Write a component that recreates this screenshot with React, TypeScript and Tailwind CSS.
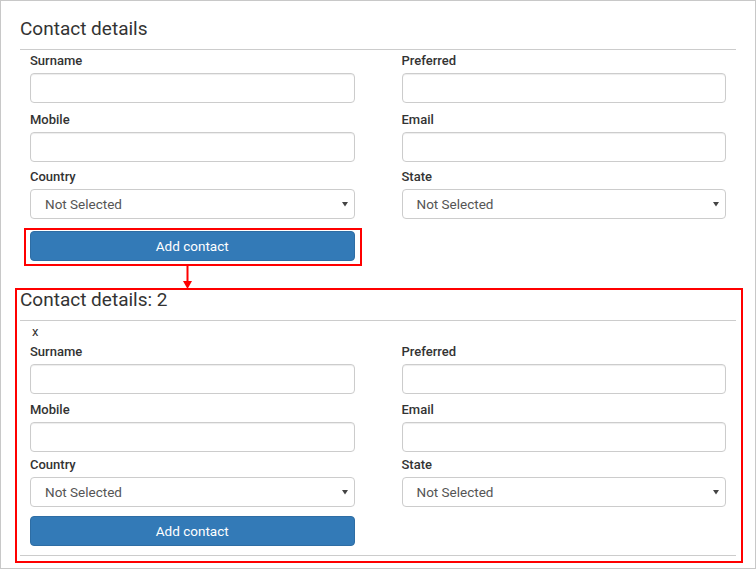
import React from "react";

const font = { fontFamily: "Roboto, 'Liberation Sans', sans-serif" };

function Label({ text }: { text: string }) {
  return <div className="h-[20px] leading-[20px] text-[13px] font-medium text-[#333] mb-[2px]">{text}</div>;
}

function TextInput() {
  return <div className="h-[30px] w-full rounded-[4px] border border-[#ccc] bg-white shadow-[inset_0_1px_1px_rgba(0,0,0,0.075)]" />;
}

function SelectBox() {
  return (
    <div className="h-[30px] w-full rounded-[4px] border border-[#ccc] bg-white flex items-center justify-between pl-[14px] pr-[6px]">
      <span className="text-[13.5px] text-[#555]">Not Selected</span>
      <svg width="6" height="5" viewBox="0 0 6 5"><path d="M0 0 L6 0 L3 4.5 Z" fill="#444" /></svg>
    </div>
  );
}

function Field({ label, select }: { label: string; select?: boolean }) {
  return (
    <div>
      <Label text={label} />
      {select ? <SelectBox /> : <TextInput />}
    </div>
  );
}

function ContactForm({ g1, g2, g3 }: { g1: string; g2: string; g3: string }) {
  return (
    <div className="px-[10px]">
      <div className={`grid grid-cols-2 gap-x-[47px] ${g1}`}>
        <Field label="Surname" />
        <Field label="Preferred" />
      </div>
      <div className={`grid grid-cols-2 gap-x-[47px] ${g2}`}>
        <Field label="Mobile" />
        <Field label="Email" />
      </div>
      <div className="grid grid-cols-2 gap-x-[47px]">
        <Field label="Country" select />
        <Field label="State" select />
      </div>
      <div className={`grid grid-cols-2 gap-x-[47px] ${g3}`}>
        <button className="h-[30px] rounded-[4px] bg-[#337ab7] border border-[#2e6da4] text-white text-[13.5px]">Add contact</button>
      </div>
    </div>
  );
}

export default function App() {
  return (
    <div className="relative w-[756px] h-[569px] border border-[#c8c8c8] bg-white px-[19px] pt-[14px] overflow-hidden" style={font}>
      {/* first block */}
      <h2 className="h-[28px] leading-[28px] text-[19px] text-[#333] mb-[6px]">Contact details</h2>
      <div className="h-px bg-[#ccc] mb-[1px]" />
      <ContactForm g1="mb-[7px]" g2="mb-[5px]" g3="mt-[12px]" />

      {/* second block */}
      <h2 className="mt-[25px] h-[28px] leading-[28px] text-[19px] text-[#333] mb-[6px]">Contact details: 2</h2>
      <div className="h-px bg-[#ccc] mb-[2px]" />
      <div className="h-[18px] leading-[18px] text-[13px] text-[#333] ml-[12px]">x</div>
      <div className="mt-[1px]">
        <ContactForm g1="mb-[6px]" g2="mb-[3px]" g3="mt-[9px]" />
      </div>
      <div className="mt-[9px] h-px bg-[#ccc]" />

      {/* annotations */}
      <div className="absolute left-[23px] top-[227px] w-[338px] h-[38px] border-2 border-[#ff0000]" />
      <svg className="absolute left-[181px] top-[265px]" width="11" height="24" viewBox="0 0 11 24">
        <line x1="5.5" y1="0" x2="5.5" y2="16" stroke="#ff0000" strokeWidth="2" />
        <path d="M1 15 L10 15 L5.5 23 Z" fill="#ff0000" />
      </svg>
      <div className="absolute left-[14px] top-[287px] w-[728px] h-[275px] border-2 border-[#ff0000]" />
    </div>
  );
}
